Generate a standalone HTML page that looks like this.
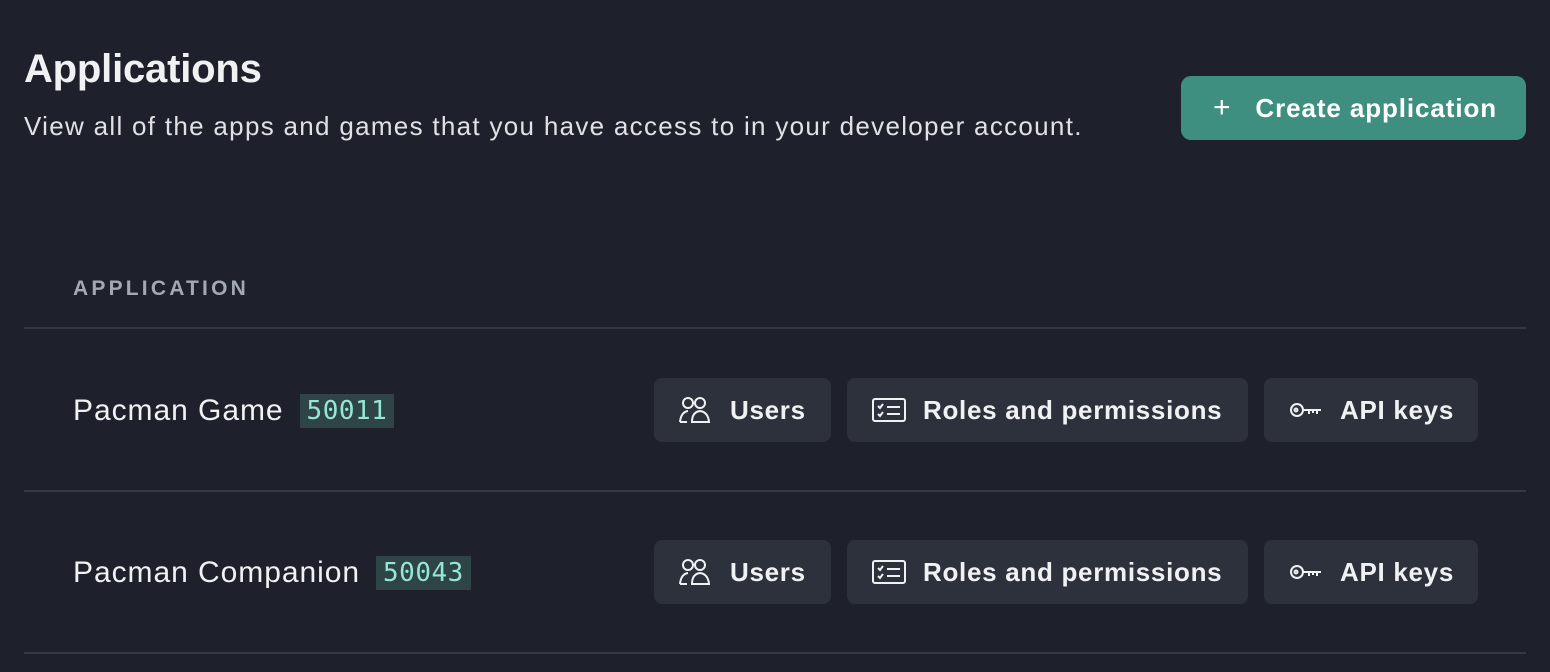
<!DOCTYPE html>
<html><head><style>
*{box-sizing:border-box;margin:0;padding:0}
body{width:1550px;height:672px;background:#1e212b;font-family:"Liberation Sans",sans-serif;color:#f0f1f3;position:relative;overflow:hidden}
h1{position:absolute;left:24px;top:47px;font-size:40px;font-weight:bold;letter-spacing:-0.2px}
.sub{position:absolute;left:24px;top:111px;font-size:26px;letter-spacing:1.3px;color:#dfe1e5}
.create{position:absolute;left:1181px;top:76px;width:345px;height:64px;background:#3f8f81;border-radius:10px;font-size:26px;font-weight:bold;color:#fff;display:flex;align-items:center;padding-left:32px;letter-spacing:0.9px}
.create span.p{font-weight:normal;font-size:30px;margin-right:24px}
.th{position:absolute;left:73px;top:277px;font-size:21px;font-weight:bold;letter-spacing:3.2px;color:#a3a9b4}
.line{position:absolute;left:24px;width:1502px;height:2px;background:#343843}
.name{position:absolute;left:73px;font-size:30px;letter-spacing:0.95px;color:#f0f1f3}
.id{display:inline-block;margin-left:16px;background:#2f4447;color:#95e6d6;font-family:"DejaVu Sans Mono","Liberation Mono",monospace;font-size:26px;letter-spacing:0.5px;padding:2px 7px;vertical-align:1px}
.btn{position:absolute;height:64px;background:#2d313c;border-radius:8px;display:flex;align-items:center;font-size:26px;font-weight:bold;color:#f0f1f3;letter-spacing:0.7px}
.btn svg{margin-left:24px;margin-right:16px}
</style></head><body>
<h1>Applications</h1>
<div class="sub">View all of the apps and games that you have access to in your developer account.</div>
<div class="create"><span class="p">+</span>Create application</div>
<div class="th">APPLICATION</div>
<div class="line" style="top:327px"></div>
<div class="line" style="top:490px"></div>
<div class="line" style="top:652px"></div>

<div class="name" style="top:394px">Pacman Game<span class="id">50011</span></div>
<div class="name" style="top:556px">Pacman Companion<span class="id">50043</span></div>

<div class="btn" style="left:654px;top:378px;width:177px"><svg width="36" height="28" viewBox="0 0 36 28" fill="none" stroke="#f0f1f3" stroke-width="2"><circle cx="10" cy="7" r="5"/><circle cx="22" cy="7" r="5"/><path d="M2 26 Q3 16 10 15 M14 26 Q14 16 22 15 Q30 16 31 26 Z M2 26 H9"/></svg>Users</div>
<div class="btn" style="left:847px;top:378px;width:401px"><svg width="36" height="28" viewBox="0 0 36 28" fill="none" stroke="#f0f1f3" stroke-width="2"><rect x="2" y="3" width="32" height="22" rx="2"/><path d="M7 10l2 2 3-4M7 18l2 2 3-4M16 11h13M16 18h13"/></svg>Roles and permissions</div>
<div class="btn" style="left:1264px;top:378px;width:214px"><svg width="36" height="28" viewBox="0 0 36 28" fill="none" stroke="#f0f1f3" stroke-width="2"><circle cx="9" cy="14" r="6"/><circle cx="8" cy="14" r="1.5"/><path d="M15 14h18M21 14v4M25 14v3M29 14v4"/></svg>API keys</div>

<div class="btn" style="left:654px;top:540px;width:177px"><svg width="36" height="28" viewBox="0 0 36 28" fill="none" stroke="#f0f1f3" stroke-width="2"><circle cx="10" cy="7" r="5"/><circle cx="22" cy="7" r="5"/><path d="M2 26 Q3 16 10 15 M14 26 Q14 16 22 15 Q30 16 31 26 Z M2 26 H9"/></svg>Users</div>
<div class="btn" style="left:847px;top:540px;width:401px"><svg width="36" height="28" viewBox="0 0 36 28" fill="none" stroke="#f0f1f3" stroke-width="2"><rect x="2" y="3" width="32" height="22" rx="2"/><path d="M7 10l2 2 3-4M7 18l2 2 3-4M16 11h13M16 18h13"/></svg>Roles and permissions</div>
<div class="btn" style="left:1264px;top:540px;width:214px"><svg width="36" height="28" viewBox="0 0 36 28" fill="none" stroke="#f0f1f3" stroke-width="2"><circle cx="9" cy="14" r="6"/><circle cx="8" cy="14" r="1.5"/><path d="M15 14h18M21 14v4M25 14v3M29 14v4"/></svg>API keys</div>
</body></html>
